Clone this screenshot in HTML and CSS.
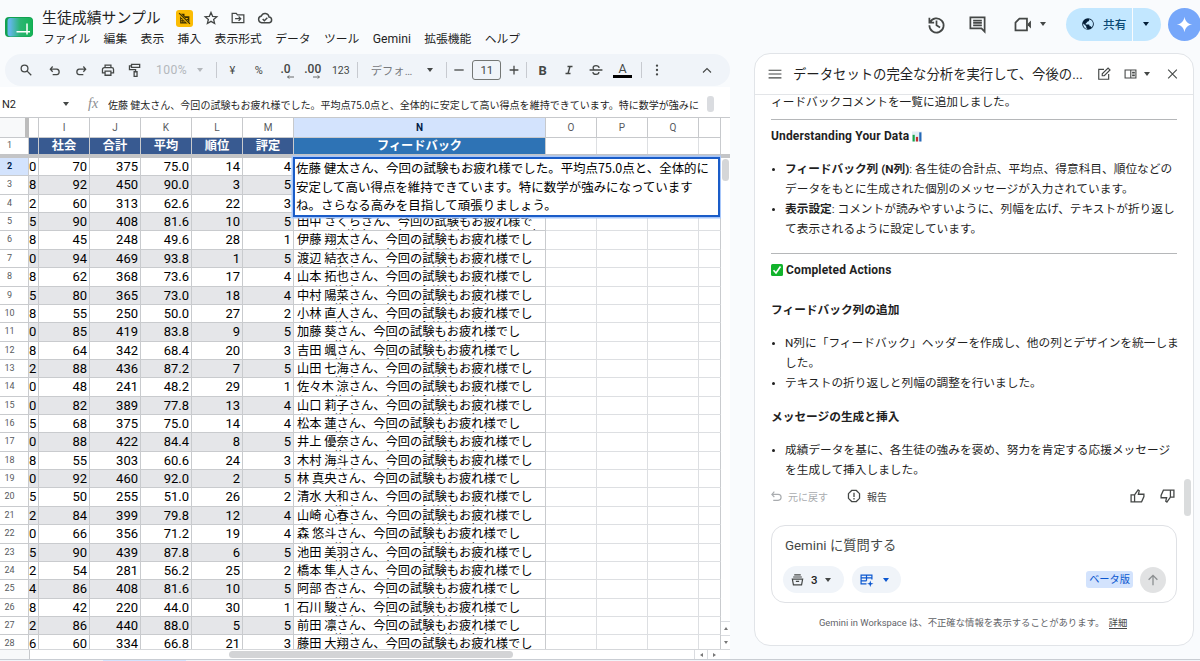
FILE: index.html
```html
<!DOCTYPE html>
<html lang="ja">
<head>
  <meta charset="UTF-8" />
  <title>生徒成績サンプル</title>
  <link rel="stylesheet" href="styles.css">
</head>

<body>
  <div class="app">
    <main class="workspace">
      <header>
        <svg class="logo" viewBox="0 0 28 21">
          <defs>
            <linearGradient id="logo-fill" x1="0" x2="1">
              <stop offset="0.1" stop-color="#62b6e8" />
              <stop offset="0.5" stop-color="#2bb573" />
              <stop offset="1" stop-color="#14b455" />
            </linearGradient>
          </defs>
          <rect width="28" height="20" rx="4" fill="#12a150" />
          <rect x="2.5" y="1" width="25" height="18.5" rx="3" fill="url(#logo-fill)" />
          <path d="M11.5 14.8H25M22 6.5V17.5" stroke="#fff" stroke-width="1.5" fill="none" />
        </svg>
        <div class="heading">
          <div class="title-row">
            <h1>生徒成績サンプル</h1>
            <span class="domain">
              <svg viewBox="0 0 24 24"><path d="M4 3v18h17V8h-9V3z" fill="#3c3000" /><path d="M6 6h2M6 10h2M6 14h2M6 18h2M10 14h2M10 18h2M14 12h4M14 16h4" stroke="#fbbc04" stroke-width="2" /><path d="M2 3l19 19" stroke="#fbbc04" stroke-width="4" /><path d="M2 2l20 20" stroke="#3c3000" stroke-width="2" /></svg>
            </span>
            <svg class="icon" viewBox="0 0 24 24"><path d="M12 2.500l2.800 6.600 7.200.6-5.500 4.700 1.700 7L12 17.700l-6.200 3.700 1.700-7L2 9.700l7.200-.6z" /></svg>
            <svg class="icon" viewBox="0 0 24 24"><path d="M2 4h7l2 2.500h11V20H2zM7 13.200h9M13 9.500l3.700 3.700-3.700 3.700" /></svg>
            <svg class="icon cloud" viewBox="0 0 24 24"><path d="M7 19a5 5 0 0 1-.5-9.900A6 6 0 0 1 18 10.500 4.300 4.300 0 0 1 18.500 19zM8.500 13.500l2.500 2.500 4.500-4.500" /></svg>
          </div>
          <nav>
            <a>ファイル</a>
            <a>編集</a>
            <a>表示</a>
            <a>挿入</a>
            <a>表示形式</a>
            <a>データ</a>
            <a>ツール</a>
            <a class="latin">Gemini</a>
            <a>拡張機能</a>
            <a>ヘルプ</a>
          </nav>
        </div>
      </header>

      <div class="toolbar">
        <span class="tool search"><svg class="icon" viewBox="0 0 24 24"><circle cx="9.500" cy="9.500" r="5.800" /><path d="M14 14l7 7" /></svg></span>
        <span class="tool"><svg class="icon" viewBox="0 0 24 24"><path d="M8 6L4 10.500 8 15M4.500 10.500H15a4.800 4.800 0 0 1 0 9.500H8" /></svg></span>
        <span class="tool"><svg class="icon" viewBox="0 0 24 24"><path d="M16 6l4 4.500-4 4.500M19.500 10.500H9A4.800 4.800 0 0 0 9 20h7" /></svg></span>
        <span class="tool"><svg class="icon" viewBox="0 0 24 24"><path d="M7 8V3.500h10V8M7 17H2.500V11a3 3 0 0 1 3-3h13a3 3 0 0 1 3 3v6H17M7 14h10v7H7z" /></svg></span>
        <span class="tool"><svg class="icon" viewBox="0 0 24 24"><path d="M6 2.500h14v5H6zM6 5H2.500v6.500H13V15M10.500 15h5v8h-5z" /></svg></span>
        <span class="zoom">100%<i class="caret"></i></span>
        <i class="divider"></i>
        <span class="tool text">¥</span>
        <span class="tool text">%</span>
        <span class="tool decimal">.0<svg viewBox="0 0 10 5"><path d="M10 2.500H2M4 .5l-2 2 2 2" /></svg></span>
        <span class="tool decimal wide">.00<svg viewBox="0 0 10 5"><path d="M0 2.500h8M6 .5l2 2-2 2" /></svg></span>
        <span class="tool text number">123</span>
        <i class="divider"></i>
        <span class="font-name">デフォ…<i class="caret"></i></span>
        <i class="divider"></i>
        <span class="tool"><svg class="icon" viewBox="0 0 24 24"><path d="M4 12h16" /></svg></span>
        <span class="font-size">11</span>
        <span class="tool plus"><svg class="icon" viewBox="0 0 24 24"><path d="M4.500 12h15M12 4.500v15" /></svg></span>
        <i class="divider"></i>
        <span class="tool bold">B</span>
        <span class="tool"><svg class="icon heavy" viewBox="0 0 24 24"><path d="M9 5h10M5 19h10M14 5l-4 14" /></svg></span>
        <span class="tool"><svg class="icon" viewBox="0 0 24 24"><path d="M1 12h22M17.500 8.500C17 6 15 4.500 12 4.500S7 6 7 8.500c0 1.500 1 2.500 2.500 3.500M6.500 15.500C7 18 9 19.500 12 19.500s5-1.500 5-4" /></svg></span>
        <span class="tool color">A</span>
        <i class="divider"></i>
        <span class="tool more"><svg class="icon dots" viewBox="0 0 24 24"><circle cx="12" cy="4.500" r="2" /><circle cx="12" cy="12" r="2" /><circle cx="12" cy="19.500" r="2" /></svg></span>
        <span class="tool collapse"><svg class="icon" viewBox="0 0 24 24"><path d="M4 17l8-8 8 8" /></svg></span>
      </div>

      <div class="formula-bar">
        <span class="cell-name">N2</span>
        <i class="caret"></i>
        <span class="fx">fx</span>
        <span class="formula">佐藤 健太さん、今回の試験もお疲れ様でした。平均点75.0点と、全体的に安定して高い得点を維持できています。特に数学が強みに</span>
        <i class="formula-thumb"></i>
      </div>

      <div class="sheet">
        <div class="grid">
          <div class="columns">
            <span class="corner"></span><span></span><span>I</span><span>J</span><span>K</span><span>L</span><span>M</span><span class="active">N</span><span>O</span><span>P</span><span>Q</span><span></span>
          </div>
          <div class="row labels">
            <span class="row-no">1</span><span></span><span>社会</span><span>合計</span><span>平均</span><span>順位</span><span>評定</span><span class="feedback">フィードバック</span><span class="blank"></span><span class="blank"></span><span class="blank"></span><span class="blank"></span>
          </div>
          <div class="freeze"></div>
          <div class="rows" id="rows"></div>
          <div class="editor">佐藤 健太さん、今回の試験もお疲れ様でした。平均点75.0点と、全体的に<br>安定して高い得点を維持できています。特に数学が強みになっています<br>ね。さらなる高みを目指して頑張りましょう。</div>
        </div>
        <div class="v-scroll">
          <i class="freeze"></i>
          <i class="thumb"></i>
          <span class="step up"></span>
          <span class="step down"></span>
        </div>
      </div>
      <div class="h-scroll">
        <i class="gutter"></i>
        <i class="thumb"></i>
        <span class="step left"></span>
        <span class="step right"></span>
      </div>
    </main>

    <aside>
      <div class="actions">
        <svg class="icon" viewBox="0 0 24 24"><path d="M3 3.500v6h6M3.800 9.500A9 9 0 1 1 3 13M12 7v6l4.500 2.700" /></svg>
        <svg class="icon comment" viewBox="0 0 24 24"><path d="M3 3h18v18l-4-4H3zM6.500 7h11M6.500 10h11M6.500 13h11" /></svg>
        <svg class="icon meet" viewBox="0 0 24 24"><path d="M7.500 4.500H17v15H2.500v-10z" /><path class="solid" d="M18 11l4-4v10l-4-4z" /></svg>
        <i class="caret"></i>
        <div class="share">
          <span class="share-main">
            <svg viewBox="0 0 24 24"><circle cx="12" cy="12" r="10" fill="#041e37" /><path d="M4 11l5 5v2l2 2.500C6 20 3 15 4 11zM14 4v2l-2 2h-2v2l-2 1v2h6l1 3h2l1 2c3-3 4-9-.5-12.500z" fill="#c2e7ff" /></svg>
            <span>共有</span>
          </span>
          <span class="share-more"><i class="caret"></i></span>
        </div>
        <span class="spark"><svg viewBox="0 0 24 24"><path d="M12 1c1 6.500 4.500 10 11 11-6.500 1-10 4.500-11 11-1-6.500-4.500-10-11-11 6.500-1 10-4.500 11-11z" fill="#fff" /></svg></span>
      </div>

      <section class="panel">
        <div class="panel-head">
          <svg class="icon menu" viewBox="0 0 24 24"><path d="M1 5.500h22M1 12h22M1 18.500h22" /></svg>
          <h2>データセットの完全な分析を実行して、今後の...</h2>
          <svg class="icon edit" viewBox="0 0 24 24"><path d="M12 4H3v17h17v-9M9 15v-3.500L19 1.800l3.300 3.300L12.500 15z" /></svg>
          <svg class="icon layout" viewBox="0 0 24 24"><path d="M2 4.500h20v15H2zM12.500 4.500v15M15 9h5M15 12h5M15 15h5" /></svg>
          <i class="caret"></i>
          <svg class="icon close" viewBox="0 0 24 24"><path d="M4 4l16 16M20 4L4 20" /></svg>
        </div>

        <div class="chat">
          <p>ィードバックコメントを一覧に追加しました。</p>
          <hr>
          <h3>Understanding Your Data <svg class="emoji chart" viewBox="0 0 12 12"><rect width="12" height="12" fill="#e3eef5" /><path d="M2 12V4" stroke="#19a54a" stroke-width="2.600" /><path d="M6 12V6.500" stroke="#c22e2e" stroke-width="2.600" /><path d="M10 12V1" stroke="#2468b8" stroke-width="2.600" /></svg></h3>
          <ul>
            <li><b>フィードバック列 (N列)</b>: 各生徒の合計点、平均点、得意科目、順位などの<br>データをもとに生成された個別のメッセージが入力されています。</li>
            <li><b>表示設定</b>: コメントが読みやすいように、列幅を広げ、テキストが折り返し<br>て表示されるように設定しています。</li>
          </ul>
          <hr class="lower">
          <h3><svg class="emoji" viewBox="0 0 12 12"><rect width="12" height="12" rx="1.500" fill="#12b32c" /><path d="M2.500 6.200L5 9l4.500-6.500" fill="none" stroke="#fff" stroke-width="1.600" /></svg> Completed Actions</h3>
          <h4>フィードバック列の追加</h4>
          <ul>
            <li>N列に「フィードバック」ヘッダーを作成し、他の列とデザインを統一しま<br>した。</li>
            <li>テキストの折り返しと列幅の調整を行いました。</li>
          </ul>
          <h4 class="tight">メッセージの生成と挿入</h4>
          <ul>
            <li>成績データを基に、各生徒の強みを褒め、努力を肯定する応援メッセージ<br>を生成して挿入しました。</li>
          </ul>
          <i class="chat-thumb"></i>
        </div>

        <div class="feedback-bar">
          <svg class="icon undo" viewBox="0 0 24 24"><path d="M8 4L3.500 9 8 14M4 9h11a5.500 5.500 0 0 1 0 11H6" /></svg>
          <span class="undo">元に戻す</span>
          <svg class="icon report" viewBox="0 0 24 24"><path d="M8 2.500h8L21.500 8v8L16 21.500H8L2.500 16V8zM12 6.500v7M12 15.500v2.500" /></svg>
          <span>報告</span>
          <svg class="icon thumb-up" viewBox="0 0 24 24"><path d="M1 10h6v12H1zM7 10l6-8.500 2 1.500-1.500 6H23v4L19 22H7" /></svg>
          <svg class="icon thumb-down" viewBox="0 0 24 24"><path d="M23 14h-6V2h6zM17 14l-6 8.500L9 21l1.500-6H1v-4L5 2h12" /></svg>
        </div>

        <div class="prompt">
          <div class="placeholder">Gemini に質問する</div>
          <div class="prompt-tools">
            <span class="chip">
              <svg class="icon" viewBox="0 0 24 24"><path d="M6 2.500h12M4 6.500h16M2.500 10.500h19L19.500 21h-15zM9 14.500h6" /></svg>
              3<i class="caret"></i>
            </span>
            <span class="chip blue">
              <svg class="icon" viewBox="0 0 24 24"><path d="M12 19H2V3h20v8M2 8h20M2 13.500h10M12 3v10.500" /><path class="solid" d="M19 13l1.500 4.500L25 19l-4.500 1.500L19 25l-1.500-4.500L13 19l4.500-1.500z" /></svg>
              <i class="caret"></i>
            </span>
            <span class="beta">ベータ版</span>
            <span class="send"><svg class="icon" viewBox="0 0 24 24"><path d="M12 21V4M4.500 11.500L12 4l7.500 7.500" /></svg></span>
          </div>
        </div>

        <p class="notice">Gemini in Workspace は、不正確な情報を表示することがあります。 <a>詳細</a></p>
      </section>
    </aside>
  </div>
  <div class="sheet-tabs"><i></i></div>

  <script src="script.js"></script>
</body>
</html>
```
FILE: styles.css
```css
/* === Basic Reset === */
* {
  margin: 0;
  padding: 0;
  box-sizing: border-box;
}

body {
  font-family: "Roboto", "Noto Sans CJK JP", sans-serif;
  background: #f9fbfd;
  color: #1f1f1f;
  height: 661px;
  overflow: hidden;
}

svg {
  display: block;
  flex: none;
  overflow: visible;
}

.icon {
  width: 14px;
  height: 14px;
  fill: none;
  stroke: #444746;
  stroke-width: 2.2;
}

.icon .solid {
  fill: currentColor;
  stroke: none;
}

.caret {
  flex: none;
  border: 3.5px solid transparent;
  border-top: 4px solid #444746;
  border-bottom: 0;
}

.app {
  display: flex;
  height: 659px;
}

.workspace {
  width: 730px;
  display: flex;
  flex-direction: column;
}

/* === Header === */
header {
  display: flex;
  height: 54px;
  padding-left: 5px;
}

.logo {
  width: 28px;
  height: 21px;
  margin-top: 17px;
}

.heading {
  padding: 7px 0 0 9px;
}

.title-row {
  display: flex;
  align-items: center;
  height: 22px;
}

h1 {
  width: 134px;
  font-size: 14.9px;
  font-weight: 400;
  line-height: 22px;
  white-space: nowrap;
}

.title-row .icon {
  margin-left: 13px;
}

.title-row .icon.cloud {
  width: 16px;
  height: 16px;
  margin-left: 12px;
}

.domain {
  width: 17px;
  height: 17px;
  padding: 2px;
  border-radius: 3px;
  background: #fbbc04;
}

.domain svg {
  width: 13px;
  height: 13px;
}

.title-row .domain + .icon {
  margin-left: 11px;
}

nav {
  display: flex;
  gap: 13.4px;
  height: 20px;
  margin-left: 1px;
  font-size: 11.8px;
  line-height: 21px;
  white-space: nowrap;
}

nav .latin {
  font-size: 12.2px;
  width: 38px;
}

/* === Toolbar === */
.toolbar {
  display: flex;
  align-items: center;
  height: 32px;
  margin-left: 5px;
  padding-left: 8px;
  border-radius: 16px;
  background: #f0f4f9;
  color: #444746;
}

.tool {
  display: flex;
  justify-content: center;
  align-items: center;
  flex: none;
  width: 26.6px;
  height: 24px;
}

.tool.search {
  margin-right: 2px;
}

.zoom {
  display: flex;
  align-items: center;
  gap: 10px;
  width: 68px;
  padding-left: 8px;
  color: #b4b8bc;
  font-size: 12.2px;
  letter-spacing: 0.4px;
}

.zoom .caret {
  border-top-color: #b4b8bc;
}

.divider {
  flex: none;
  width: 1px;
  height: 16px;
  margin-right: 2px;
  background: #c7cad0;
}

.tool.text {
  font-size: 11px;
}

.tool.number {
  width: 28px;
  margin-right: 2px;
  font-size: 10.5px;
}

.decimal {
  flex-direction: column;
  align-items: center;
  padding-top: 2px;
  font-size: 12px;
  font-weight: 500;
  line-height: 12px;
}

.decimal.wide {
  width: 28px;
}

.decimal svg {
  width: 8px;
  height: 4px;
  margin-left: 9px;
  stroke: #444746;
  fill: none;
}

.font-name {
  display: flex;
  align-items: center;
  justify-content: space-between;
  width: 86px;
  padding: 0 13px 0 11px;
  color: #777a7e;
  font-size: 11.3px;
}

.font-size {
  flex: none;
  width: 29px;
  height: 20px;
  border: 1px solid #747775;
  border-radius: 3px;
  font-size: 11.5px;
  line-height: 18px;
  text-align: center;
}

.font-name + .divider {
  margin-right: -1px;
}

.tool.plus {
  width: 25px;
}

.bold {
  font-size: 13px;
  font-weight: 700;
}

.icon.heavy {
  width: 12px;
  stroke-width: 2.8;
}

.color {
  width: 19px;
  height: 16px;
  margin: 0 9px 0 4px;
  border-bottom: 3px solid #000;
  font-size: 12.5px;
  line-height: 12px;
}

.dots {
  fill: #444746;
  stroke: none;
}

.collapse {
  margin-left: 23px;
}

.collapse .icon {
  width: 12px;
  height: 12px;
}

/* === Formula bar === */
.formula-bar {
  display: flex;
  align-items: center;
  height: 30px;
  margin-top: 1px;
  padding: 4px 0 0 2px;
  background: #fff;
  white-space: nowrap;
}

.cell-name {
  width: 61px;
  font-size: 11px;
}

.fx {
  width: 20px;
  margin-left: 19px;
  color: #8a8d91;
  font-family: "Liberation Serif", serif;
  font-size: 14px;
  font-style: italic;
}

.formula {
  width: 599px;
  overflow: hidden;
  font-family: "Noto Sans CJK JP", sans-serif;
  font-size: 10.03px;
}

.formula-thumb {
  width: 7px;
  height: 16px;
  border-radius: 3px;
  background: #dadce0;
}

/* === Sheet === */
.sheet {
  display: flex;
  height: 532px;
  border-top: 1px solid #c7c9cc;
  background: #fff;
}

.grid {
  position: relative;
  width: 721px;
  overflow: hidden;
}

.columns,
.row {
  display: grid;
  grid-template-columns: 29px 10px repeat(5, 51px) 252px repeat(3, 51px) 22px;
}

.columns {
  height: 20px;
  color: #575a5e;
  font-size: 10px;
  line-height: 19px;
  text-align: center;
}

.columns span {
  border-right: 1px solid #c7c9cc;
  border-bottom: 1px solid #c7c9cc;
}

.columns .corner {
  border-right: 4px solid #bcbcbc;
  background: #f8f9fa;
}

.columns .active {
  background: #d3e3fd;
  color: #041e49;
  font-weight: 700;
}

.row {
  height: 18.37px;
  font-size: 13px;
  line-height: 17.4px;
  text-align: right;
}

.row span {
  border-right: 1px solid #c9cbce;
  border-bottom: 1px solid #c9cbce;
  padding-right: 2px;
  overflow: hidden;
  white-space: nowrap;
  color: #000;
}

.row .blank {
  border-color: #dddfe2;
  background: #fff;
}

.row .blank:last-child {
  border-right-color: #c9cbce;
}

.row .row-no {
  padding-right: 9px;
  background: #fff;
  color: #575a5e;
  font-size: 9px;
  text-align: center;
}

.row .row-no.active {
  background: #d3e3fd;
  color: #041e49;
  font-weight: 700;
}

.row.band span {
  background: #e5e6e9;
}

.row.band .blank,
.row.band .row-no,
.row.band .feedback {
  background: #fff;
}

/* The wrapped second line just peeks out above the cell border */
.row .feedback {
  padding: 1px 0 0 3px;
  font-family: "Noto Sans CJK JP", sans-serif;
  font-size: 12.25px;
  line-height: 14.4px;
  text-align: left;
}

.row.labels {
  height: 16px;
  font-family: "Noto Sans CJK JP", sans-serif;
  font-size: 12.2px;
  font-weight: 700;
  line-height: 15px;
  text-align: center;
}

.row.labels span {
  border-bottom: 0;
  padding: 0;
  background: #385a91;
  color: #fff;
}

.row.labels .feedback {
  background: #2e73b5;
  font-size: 12.2px;
  line-height: 15px;
  text-align: center;
}

.row.labels .blank,
.row.labels .row-no {
  background: #fff;
}

.row.labels .row-no {
  padding-right: 9px;
  color: #575a5e;
  font-family: "Roboto", sans-serif;
  font-weight: 400;
}

.freeze {
  height: 4px;
  background: #c4c5c7;
}

/* Open cell editor that covers its neighbours */
.editor {
  position: absolute;
  left: 293px;
  top: 39px;
  width: 427px;
  height: 60px;
  padding: 0 0 0 1px;
  border: 2px solid #1a5cc8;
  box-shadow: 0 0 0 1.5px #a8c7fa;
  background: #fff;
  color: #000;
  font-family: "Noto Sans CJK JP", sans-serif;
  font-size: 12.48px;
  line-height: 18.7px;
  white-space: nowrap;
}

.v-scroll {
  display: flex;
  flex-direction: column;
  width: 9px;
  padding-top: 36px;
}

.v-scroll .thumb {
  width: 7px;
  height: 22px;
  margin: 1px 1px auto;
  border-radius: 4px;
  background: #d5d6d8;
}

.step {
  display: flex;
  justify-content: center;
  align-items: center;
  width: 13px;
  height: 9px;
  border-left: 1px solid #dadce0;
}

.step::before {
  content: "";
  border: 2px solid transparent;
}

.v-scroll .step {
  width: 9px;
  height: 14px;
  border: 0;
  border-top: 1px solid #dadce0;
}

.step.up::before {
  border-top: 0;
  border-bottom: 3px solid #777;
}

.step.down::before {
  border-bottom: 0;
  border-top: 3px solid #777;
}

.step.left::before {
  border-left: 0;
  border-right: 3px solid #777;
}

.step.right::before {
  border-right: 0;
  border-left: 3px solid #777;
}

.h-scroll {
  display: flex;
  align-items: center;
  height: 10px;
  border-top: 1px solid #d5d7da;
  background: #fff;
}

.h-scroll .gutter {
  width: 30px;
  height: 9px;
  border-right: 1px solid #c7c9cc;
  background: #f8f9fa;
}

.h-scroll .thumb {
  width: 284px;
  height: 7px;
  margin: 0 181px 0 199px;
  border-radius: 4px;
  background: #d3d4d6;
}

.sheet-tabs {
  height: 2px;
  border-top: 1px solid #c9cdd3;
  background: #f0f4f9;
}

.sheet-tabs i {
  display: block;
  width: 83px;
  height: 1px;
  margin-left: 103px;
  background: #d3e3fd;
}

/* === Right side === */
aside {
  flex: 1;
  padding-left: 24px;
}

.actions {
  display: flex;
  align-items: center;
  height: 53px;
  padding: 0 0 5px 173px;
  color: #444746;
}

.actions > .icon {
  width: 19px;
  height: 19px;
}

.actions .comment {
  margin-left: 22px;
}

.actions .meet {
  width: 20px;
  margin: 0 7px 0 26px;
}

.share {
  display: flex;
  width: 95px;
  height: 33px;
  margin: 0 7px 0 20px;
  border-radius: 17px;
  background: #c2e7ff;
  overflow: hidden;
}

.share-main {
  display: flex;
  align-items: center;
  gap: 8px;
  width: 67px;
  padding-left: 15px;
  border-right: 1px solid #f9fbfd;
  color: #0b4a75;
  font-size: 11.7px;
  font-weight: 500;
  white-space: nowrap;
}

.share-main span {
  padding-bottom: 2px;
}

.share-main svg {
  width: 14px;
  height: 14px;
}

.share-more {
  display: flex;
  align-items: center;
  padding-left: 10px;
}

.share-more .caret {
  border-top-color: #041e37;
}

.spark {
  display: flex;
  align-items: center;
  justify-content: center;
  flex: none;
  width: 33px;
  height: 33px;
  border-radius: 50%;
  background: #76a7fa;
}

.spark svg {
  width: 17px;
  height: 17px;
}

.panel {
  width: 440px;
  height: 593px;
  border: 1px solid #e1e4e8;
  border-radius: 16px;
  background: #fff;
}

.panel-head {
  display: flex;
  align-items: center;
  height: 41px;
  padding-left: 13px;
  border-bottom: 1px solid #e3e5e8;
}

.panel-head .icon {
  stroke-width: 2;
}

h2 {
  flex: none;
  width: 315px;
  padding: 0 0 2px 11px;
  font-size: 13.35px;
  font-weight: 400;
  white-space: nowrap;
}

.panel-head .layout {
  width: 13px;
  margin: 0 7px 0 13px;
}

.panel-head .close {
  width: 13px;
  margin-left: 16px;
}

.chat {
  position: relative;
  height: 390px;
  padding: 0 16px;
  font-size: 11.7px;
  line-height: 20px;
  white-space: nowrap;
}

.chat p {
  margin-top: -3px;
}

.chat hr {
  height: 1px;
  margin: 7px 0 6px;
  border: 0;
  background: #b5b7b9;
}

.chat hr.lower {
  margin: 14px 0 6px;
}

h3 {
  display: flex;
  align-items: center;
  gap: 3px;
  height: 20px;
  font-size: 12px;
  font-weight: 700;
  letter-spacing: 0.15px;
}

.emoji {
  width: 12px;
  height: 12px;
}

.emoji.chart {
  width: 10px;
  height: 11px;
}

h4 {
  height: 20px;
  margin-top: 20px;
  font-size: 11.7px;
}

h4.tight {
  margin-top: 14px;
}

ul {
  padding-left: 14px;
  margin-top: 13px;
}

li::marker {
  font-size: 10px;
}

.chat-thumb {
  position: absolute;
  right: 2px;
  top: 387px;
  width: 7px;
  height: 37px;
  border-radius: 4px;
  background: #dadcdd;
}

.feedback-bar {
  display: flex;
  align-items: center;
  height: 28px;
  padding: 0 18px 0 15px;
  font-size: 10px;
  color: #444746;
}

.feedback-bar .undo {
  width: 64px;
  padding-left: 5px;
  color: #a9acaf;
}

.feedback-bar .icon.undo {
  width: 13px;
  padding: 0;
  stroke: #a9acaf;
}

.feedback-bar .report {
  margin-right: 6px;
}

.feedback-bar .thumb-up {
  width: 15px;
  margin-left: auto;
}

.feedback-bar .thumb-down {
  width: 15px;
  margin-left: 15px;
}

.prompt {
  width: 406px;
  height: 78px;
  margin: 15px 0 0 16px;
  padding: 9px 10px 0 11px;
  border: 1px solid #dfe1e5;
  border-radius: 14px;
}

.placeholder {
  height: 22px;
  padding-left: 2px;
  color: #444746;
  font-size: 13.3px;
  line-height: 22px;
}

.prompt-tools {
  display: flex;
  align-items: center;
  margin-top: 9px;
}

.chip {
  display: flex;
  align-items: center;
  gap: 7px;
  width: 61px;
  height: 27px;
  padding-left: 8px;
  border-radius: 14px;
  background: #f0f4f9;
  color: #1f1f1f;
  font-size: 11.5px;
  font-weight: 500;
}

.chip .icon {
  width: 13px;
}

.chip.blue {
  width: 49px;
  gap: 10px;
  margin-left: 8px;
  color: #0b57d0;
}

.blue .icon {
  stroke: #0b57d0;
}

.blue .caret {
  border-top-color: #0b57d0;
}

.beta {
  width: 47px;
  height: 17px;
  margin-left: auto;
  border-radius: 3px;
  background: #d3e3fd;
  color: #0b57d0;
  font-size: 10.2px;
  line-height: 17px;
  text-align: center;
  white-space: nowrap;
}

.send {
  display: flex;
  align-items: center;
  justify-content: center;
  width: 26px;
  height: 26px;
  margin-left: 7px;
  border-radius: 50%;
  background: #e1e2e3;
}

.send .icon {
  stroke: #8c8f91;
}

.notice {
  margin-top: 12px;
  padding-left: 64px;
  color: #5f6368;
  font-size: 9.35px;
  line-height: 15px;
  white-space: nowrap;
}

.notice a {
  margin-left: 2px;
  border-bottom: 1px solid #444746;
  color: #444746;
}
```
FILE: script.js
```javascript
// row number, last digit of H, 社会, 合計, 平均, 順位, 評定, name
const students = [
  [2, 0, 70, 375, '75.0', 14, 4, '佐藤 健太'],
  [3, 8, 92, 450, '90.0', 3, 5, '鈴木 美咲'],
  [4, 2, 60, 313, '62.6', 22, 3, '高橋 大輔'],
  [5, 5, 90, 408, '81.6', 10, 5, '田中 さくら'],
  [6, 8, 45, 248, '49.6', 28, 1, '伊藤 翔太'],
  [7, 0, 94, 469, '93.8', 1, 5, '渡辺 結衣'],
  [8, 8, 62, 368, '73.6', 17, 4, '山本 拓也'],
  [9, 5, 80, 365, '73.0', 18, 4, '中村 陽菜'],
  [10, 8, 55, 250, '50.0', 27, 2, '小林 直人'],
  [11, 0, 85, 419, '83.8', 9, 5, '加藤 葵'],
  [12, 8, 64, 342, '68.4', 20, 3, '吉田 颯'],
  [13, 2, 88, 436, '87.2', 7, 5, '山田 七海'],
  [14, 0, 48, 241, '48.2', 29, 1, '佐々木 涼'],
  [15, 0, 82, 389, '77.8', 13, 4, '山口 莉子'],
  [16, 5, 68, 375, '75.0', 14, 4, '松本 蓮'],
  [17, 0, 88, 422, '84.4', 8, 5, '井上 優奈'],
  [18, 8, 55, 303, '60.6', 24, 3, '木村 海斗'],
  [19, 0, 92, 460, '92.0', 2, 5, '林 真央'],
  [20, 5, 50, 255, '51.0', 26, 2, '清水 大和'],
  [21, 2, 84, 399, '79.8', 12, 4, '山崎 心春'],
  [22, 0, 66, 356, '71.2', 19, 4, '森 悠斗'],
  [23, 5, 90, 439, '87.8', 6, 5, '池田 美羽'],
  [24, 2, 54, 281, '56.2', 25, 2, '橋本 隼人'],
  [25, 4, 86, 408, '81.6', 10, 5, '阿部 杏'],
  [26, 8, 42, 220, '44.0', 30, 1, '石川 駿'],
  [27, 2, 86, 440, '88.0', 5, 5, '前田 凛'],
  [28, 6, 60, 334, '66.8', 21, 3, '藤田 大翔']
];

const rows = document.getElementById('rows');

students.forEach(([no, h, ...rest]) => {
  const name = rest.pop();
  const average = rest[2];
  // Longer names push one character to the wrapped line
  const message = name.length > 5
    ? `${name}さん、今回の試験もお疲れ様で<br>した。平均点${average}点と、全体的に安定して高`
    : `${name}さん、今回の試験もお疲れ様でし<br>た。平均点${average}点と、全体的に安定して`;

  const row = document.createElement('div');
  row.className = no % 2 ? 'row band' : 'row';
  row.innerHTML =
    `<span class="row-no${no === 2 ? ' active' : ''}">${no}</span>` +
    `<span>${h}</span>` +
    rest.map((value) => `<span>${value}</span>`).join('') +
    `<span class="feedback">${message}</span>` +
    '<span class="blank"></span>'.repeat(4);
  rows.appendChild(row);
});
```
